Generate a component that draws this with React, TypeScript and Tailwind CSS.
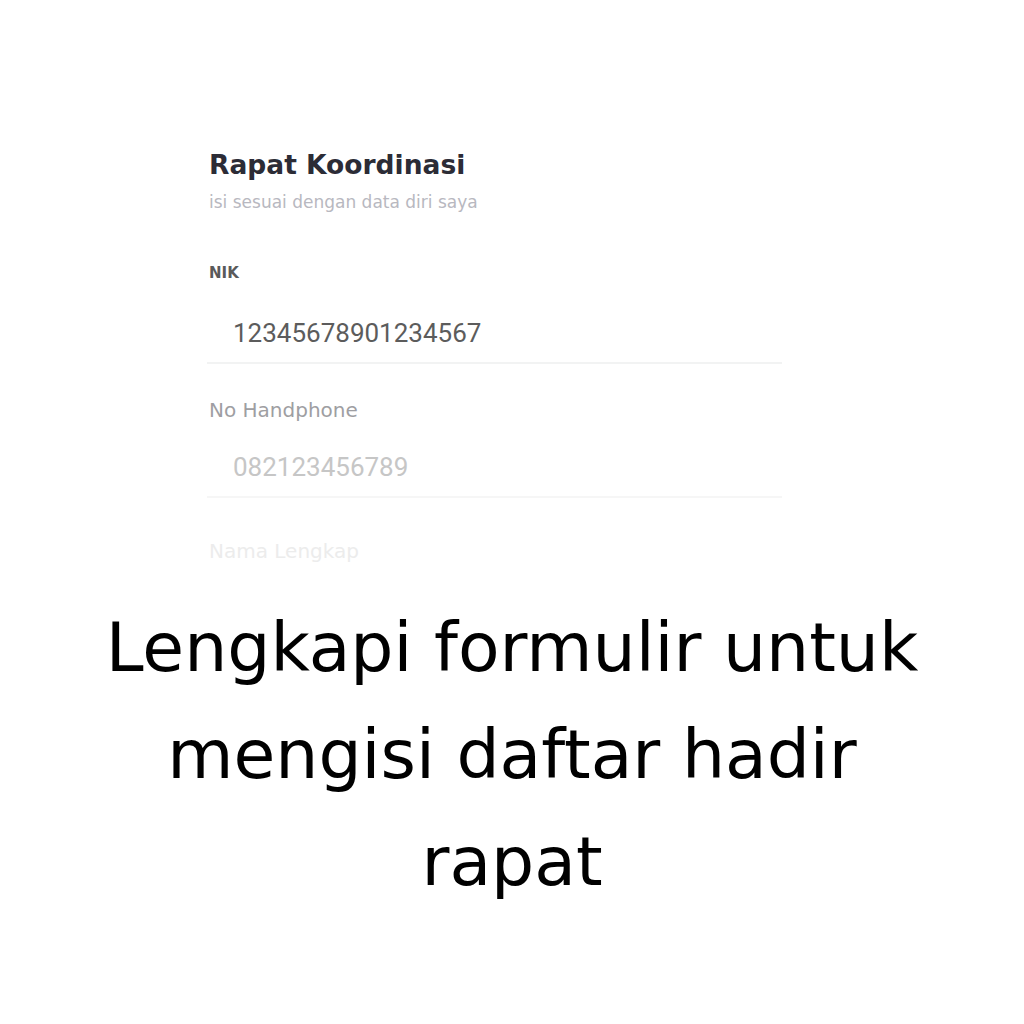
export default function App() {
  return (
    <div className="w-[1024px] h-[1024px] bg-white flex flex-col" style={{ fontFamily: "'DejaVu Sans', 'Noto Sans', sans-serif" }}>
      {/* Form preview */}
      <div className="ml-[207px] w-[575px] pt-[148px] flex flex-col">
        <h1 className="text-[26.5px] leading-[34px] font-bold text-[#2c2c36] pl-[2px]">Rapat Koordinasi</h1>
        <p className="text-[17px] leading-[22px] text-[#b8b8c0] pl-[2px] mt-[9px]">isi sesuai dengan data diri saya</p>

        <label className="mt-[50px] text-[15px] leading-[20px] font-bold text-[#5a5a5a] pl-[2px]">NIK</label>
        <div className="mt-[35px] pl-[26px] pb-[14px] border-b-2 border-[#f2f3f3] text-[26px] leading-[30px] text-[#5c5c5c]" style={{ fontFamily: "Roboto, sans-serif" }}>
          12345678901234567
        </div>

        <label className="mt-[33px] text-[20px] leading-[26px] text-[#9e9ea2] pl-[2px]">No Handphone</label>
        <div className="mt-[29px] pl-[26px] pb-[14px] border-b-2 border-[#f6f6f6] text-[26px] leading-[30px] text-[#c6c6c6]" style={{ fontFamily: "Roboto, sans-serif" }}>
          082123456789
        </div>

        <label className="mt-[40px] text-[20px] leading-[26px] text-[#ececec] pl-[2px]">Nama Lengkap</label>
      </div>

      {/* Caption */}
      <p className="mt-[30px] text-center text-[68px] leading-[107px] text-black">
        Lengkapi formulir untuk
        <br />
        mengisi daftar hadir
        <br />
        rapat
      </p>
    </div>
  );
}
